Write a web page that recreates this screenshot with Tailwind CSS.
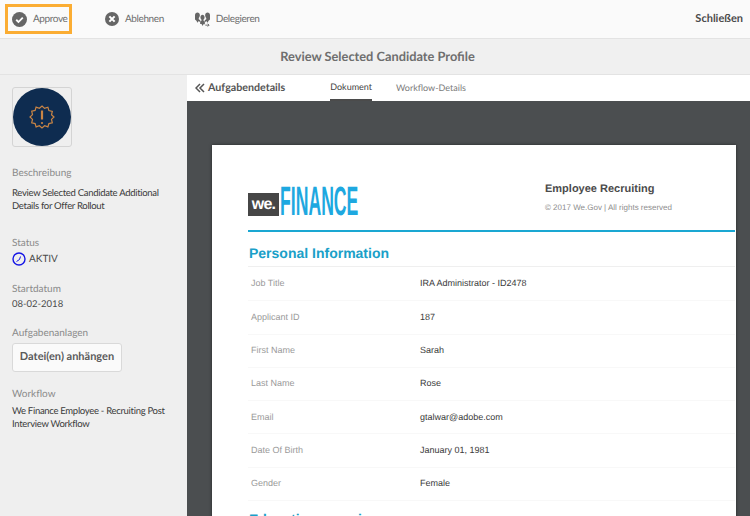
<!DOCTYPE html>
<html lang="de">
<head>
    <meta charset="UTF-8">
    <title>Review Selected Candidate Profile</title>
    <script src="https://cdn.jsdelivr.net/npm/@tailwindcss/browser@4"></script>
</head>
<body class="w-[750px] h-[516px] overflow-hidden bg-[#efefef] font-['Lato',sans-serif] [text-rendering:geometricPrecision]">

<!-- Toolbar -->
<div class="h-[39px] flex items-center bg-[#fafafa] border-b border-[#e3e3e3] text-[10px] tracking-[-0.4px] text-[#6e6e6e]">
    <div class="ml-[5px] w-[67px] h-[30px] shrink-0 border-[3px] border-[#fbad33] flex items-center pl-[4px] gap-[6px]">
        <svg class="w-[15px] h-[15px] shrink-0" viewBox="0 0 16 16"><circle cx="8" cy="8" r="8" fill="#666"/><path d="M4.500 8.300l2.400 2.400 4.600-4.800" fill="none" stroke="#fff" stroke-width="2"/></svg>
        <span>Approve</span>
    </div>
    <div class="ml-[33px] flex items-center gap-[6px]">
        <svg class="w-[14px] h-[14px] shrink-0" viewBox="0 0 16 16"><circle cx="8" cy="8" r="8" fill="#666"/><path d="M5 5l6 6M11 5l-6 6" fill="none" stroke="#fff" stroke-width="2.400"/></svg>
        <span>Ablehnen</span>
    </div>
    <div class="ml-[31px] flex items-center gap-[6px]">
        <svg class="w-[15px] h-[15px] shrink-0" viewBox="0 0 16 16" fill="#666"><path d="M0 3.500C0 1.500 1.200.5 2.600.5S5.200 1.500 5.200 3.500c0 1.300-.6 2.300-1.200 2.800v1.400l1.600 1v2.300L4 9.500 2.600 11.500 1.500 9.300 0 8V3.500z"/><path d="M10.800 3.500c0-2 1.200-3 2.600-3S16 1.500 16 3.500V8l-1.500 1.300-1.100 2.200L12 9.500l-1.600 1.600V8.700l1.600-1V6.300c-.6-.5-1.200-1.500-1.200-2.800z"/><path d="M5.800 5.500c0-1.800 1-2.700 2.200-2.700s2.200.9 2.200 2.700c0 1.200-.5 2-1.100 2.500v1.300l1.400.9v2.800H9L8 15 7 12.800H5.500V10.200l1.400-.9V8c-.6-.5-1.100-1.300-1.100-2.500z"/><path d="M11 14h4l-1.500-1.500M15 14l-1.500 1.500" fill="none" stroke="#666" stroke-width="1"/></svg>
        <span>Delegieren</span>
    </div>
    <span class="ml-auto mr-[7px] text-[11px] tracking-normal font-bold text-[#4b4b4b]">Schließen</span>
</div>

<!-- Title -->
<div class="h-[36px] pl-[5px] flex items-center justify-center bg-[#f0f0f0] border-b border-[#e3e3e3] text-[12.800px] font-bold text-[#6e6e6e]">
    Review Selected Candidate Profile
</div>

<div class="flex h-[441px]">
    <!-- Sidebar -->
    <div class="w-[187px] shrink-0 pl-[12px] pt-[12px] text-[10px] text-[#8a8a8a]">
        <div class="w-[60px] h-[60px] border border-[#d4d4d4] rounded-[3px] flex items-center justify-center">
            <div class="w-[58px] h-[58px] rounded-full bg-[#0e2c50] flex items-center justify-center">
                <svg class="w-[26px] h-[26px]" viewBox="0 0 26 26" fill="none" stroke="#c98545" stroke-width="1.200"><path d="M13 2l2.600 2.400 3.300-1.100 1 3.300 3.400.8-.8 3.400L25 13l-2.500 2.400.8 3.400-3.400.8-1 3.300-3.300-1.100L13 24l-2.600-2.200-3.300 1.100-1-3.300-3.400-.8.8-3.400L1 13l2.500-2.400-.8-3.400 3.400-.8 1-3.300 3.300 1.100z"/><path d="M13 6.500v9" stroke-width="2.200"/><circle cx="13" cy="19" r="1.100" fill="#c98545" stroke="none"/></svg>
            </div>
        </div>
        <div class="mt-[20px] leading-[13px]">Beschreibung</div>
        <div class="mt-[7px] leading-[13px] text-[9.500px] tracking-[-0.3px] text-[#3a3a3a] w-[165px]">Review Selected Candidate Additional Details for Offer Rollout</div>
        <div class="mt-[24px] leading-[13px]">Status</div>
        <div class="mt-[2px] flex items-center gap-[3px] text-[#4b4b4b] leading-[14px]">
            <svg class="w-[14px] h-[14px] shrink-0" viewBox="0 0 14 14" fill="none" stroke="#1616e6"><circle cx="7" cy="7" r="6" stroke-width="1.400"/><path d="M4.500 9.500L7.500 7.500 8.500 4.500" stroke-width="1"/></svg>
            <span>AKTIV</span>
        </div>
        <div class="mt-[17px] leading-[13px]">Startdatum</div>
        <div class="mt-[2px] leading-[13px] text-[9.500px] text-[#4b4b4b]">08-02-2018</div>
        <div class="mt-[16px] leading-[13px]">Aufgabenanlagen</div>
        <div class="mt-[3px] w-[110px] h-[29px] flex items-center justify-center bg-[#fafafa] border border-[#d9d9d9] rounded-[3px] text-[11px] font-bold text-[#5a5a5a]">Datei(en) anhängen</div>
        <div class="mt-[16px] leading-[13px]">Workflow</div>
        <div class="mt-[4px] leading-[13px] text-[9.500px] tracking-[-0.3px] text-[#3a3a3a] w-[165px]">We Finance Employee - Recruiting Post Interview Workflow</div>
    </div>

    <!-- Main -->
    <div class="flex-1 min-w-0 flex flex-col">
        <div class="h-[26px] shrink-0 bg-white flex items-center text-[9px] text-[#7a7a7a]">
            <svg class="ml-[8px] w-[10px] h-[10px] shrink-0" viewBox="0 0 10 10" fill="none" stroke="#555" stroke-width="1.500"><path d="M5 1L1 5l4 4M9 1L5 5l4 4"/></svg>
            <span class="ml-[3px] text-[10.700px] font-bold text-[#555]">Aufgabendetails</span>
            <div class="ml-[45px] h-full flex items-center border-b-2 border-[#4b4b4b] text-[#3f3f3f]">Dokument</div>
            <div class="ml-[24px]">Workflow-Details</div>
        </div>
        <div class="flex-1 bg-[#4b4e50] pt-[44px] pl-[25px] pr-[14px] overflow-hidden">
            <div class="h-[400px] bg-white pl-[36px] pr-[1px] font-['Liberation_Sans',sans-serif] shadow-[0_0_3px_rgba(0,0,0,0.5)]">
                <div class="h-[87px] flex border-b-2 border-[#1aa7d2]">
                    <div class="w-[297px] pt-[41px]">
                        <div class="h-[30px] flex items-end">
                            <div class="w-[31px] h-[23px] shrink-0 bg-[#464646] flex items-center justify-center text-white font-bold text-[16px] tracking-[-0.8px]">we.</div>
                            <div class="ml-[1px] w-[79px] h-[30px] flex items-center text-[#1ea8e0] font-bold text-[41px] leading-[30px] origin-left scale-x-[0.43]">FINANCE</div>
                        </div>
                    </div>
                    <div class="pt-[37px]">
                        <div class="text-[11px] leading-[14px] font-bold text-[#4b4b4b]">Employee Recruiting</div>
                        <div class="mt-[7px] text-[8px] leading-[10px] text-[#8d8d8d]">© 2017 We.Gov | All rights reserved</div>
                    </div>
                </div>
                <div class="h-[35px] pl-[1px] pb-[2px] flex items-end border-b border-[#efefef] text-[14px] font-bold text-[#1aa0c8]">Personal Information</div>
                <div class="pt-[1px] text-[9px]">
                    <div class="h-[33.300px] flex items-center border-b border-[#f8f8f8] pl-[3px]"><span class="w-[169px] text-[#9a9a9a]">Job Title</span><span class="text-[#3a3a3a]">IRA Administrator - ID2478</span></div>
                    <div class="h-[33.300px] flex items-center border-b border-[#f8f8f8] pl-[3px]"><span class="w-[169px] text-[#9a9a9a]">Applicant ID</span><span class="text-[#3a3a3a]">187</span></div>
                    <div class="h-[33.300px] flex items-center border-b border-[#f8f8f8] pl-[3px]"><span class="w-[169px] text-[#9a9a9a]">First Name</span><span class="text-[#3a3a3a]">Sarah</span></div>
                    <div class="h-[33.300px] flex items-center border-b border-[#f8f8f8] pl-[3px]"><span class="w-[169px] text-[#9a9a9a]">Last Name</span><span class="text-[#3a3a3a]">Rose</span></div>
                    <div class="h-[33.300px] flex items-center border-b border-[#f8f8f8] pl-[3px]"><span class="w-[169px] text-[#9a9a9a]">Email</span><span class="text-[#3a3a3a]">gtalwar@adobe.com</span></div>
                    <div class="h-[33.300px] flex items-center border-b border-[#f8f8f8] pl-[3px]"><span class="w-[169px] text-[#9a9a9a]">Date Of Birth</span><span class="text-[#3a3a3a]">January 01, 1981</span></div>
                    <div class="h-[33.300px] flex items-center border-b border-[#f8f8f8] pl-[3px]"><span class="w-[169px] text-[#9a9a9a]">Gender</span><span class="text-[#3a3a3a]">Female</span></div>
                </div>
                <div class="mt-[8px] pl-[1px] text-[14px] font-bold text-[#1aa0c8]">Education experience</div>
            </div>
        </div>
    </div>
</div>
</body>
</html>
